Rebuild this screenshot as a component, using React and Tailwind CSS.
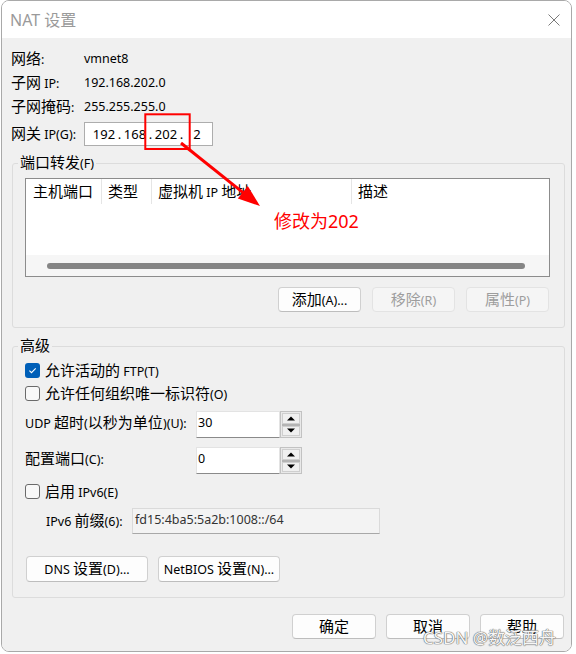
import React from "react";

const CJK_RE = /([\u2E80-\u9FFF\uF900-\uFAFF\uFF01-\uFF60]+)/;

function T({ children, c = "text-[15px]" }) {
  const parts = String(children).split(CJK_RE);
  return (
    <span>
      {parts.map((p, i) =>
        p === "" ? null : i % 2 === 1 ? (
          <span key={i} className={`${c} font-['Noto_Sans_CJK_SC',sans-serif]`}>
            {p}
          </span>
        ) : (
          <span key={i}>{p}</span>
        )
      )}
    </span>
  );
}

function Btn({ children, w = "w-[84px]", h = "h-[25px]", disabled }) {
  return (
    <div
      className={`${w} ${h} flex items-center justify-center rounded-[4px] border leading-[20px] ${
        disabled
          ? "border-[#e3e3e3] bg-[#f5f5f5] text-[#9d9d9d]"
          : "border-[#d0d0d0] border-b-[#bdbdbd] bg-[#fdfdfd] text-black"
      }`}
    >
      <T>{children}</T>
    </div>
  );
}

function Check({ checked }) {
  return checked ? (
    <div className="w-[15px] h-[15px] rounded-[3px] bg-[#005fb8] flex items-center justify-center shrink-0">
      <svg width="11" height="11" viewBox="0 0 11 11">
        <path d="M2.4 5.6 L4.5 7.7 L8.7 3.4" fill="none" stroke="white" strokeWidth="1.1" />
      </svg>
    </div>
  ) : (
    <div className="w-[15px] h-[15px] rounded-[3px] border border-[#6a6a6a] bg-[#f8f8f8] shrink-0" />
  );
}

function Spin() {
  return (
    <div className="w-[22px] h-[27px] border border-[#c2c2c2] bg-[#e9e9e9] p-[1px] flex flex-col">
      <div className="flex-1 border border-[#cfcfcf] bg-[#f0f0f0] flex items-center justify-center">
        <svg width="8" height="5" viewBox="0 0 8 5">
          <path d="M0 4.5 L4 0.5 L8 4.5Z" fill="#000" />
        </svg>
      </div>
      <div className="h-[2px] bg-[#b4b4b4]" />
      <div className="flex-1 border border-[#cfcfcf] bg-[#f0f0f0] flex items-center justify-center">
        <svg width="8" height="5" viewBox="0 0 8 5">
          <path d="M0 0.5 L4 4.5 L8 0.5Z" fill="#000" />
        </svg>
      </div>
    </div>
  );
}

function InfoRow({ label, value }) {
  return (
    <div className="h-[24px] flex items-center leading-[20px]">
      <div className="w-[73px]">
        <T>{label}</T>
      </div>
      <div>{value}</div>
    </div>
  );
}

function IpField({ v }) {
  return <span className="inline-block w-[24px] text-center">{v}</span>;
}
function Dot() {
  return <span className="inline-block w-[7px] text-center">.</span>;
}

export default function App() {
  return (
    <div className="relative w-[576px] h-[654px] bg-white font-['Noto_Sans','Noto_Sans_CJK_SC',sans-serif] text-[12.5px] text-black">
      <div className="ml-[1px] w-[571px] h-[652px] border border-[#a9a9a9] rounded-[8px] overflow-hidden flex flex-col">
        {/* title bar */}
        <div className="h-[37px] bg-white flex items-center justify-between pl-[8px] text-[#9a9a9a] text-[16px] leading-[22px] shrink-0">
          <div className="h-[22px] flex items-center">
            <T c="text-[16px]">NAT 设置</T>
          </div>
          <svg width="12" height="12" viewBox="0 0 12 12" className="mr-[11px]">
            <path d="M0.5 0.5 L11.5 11.5 M11.5 0.5 L0.5 11.5" stroke="#7a7a7a" strokeWidth="1" />
          </svg>
        </div>

        {/* body */}
        <div className="flex-1 bg-[#f0f0f0] flex flex-col pl-[10px]">
          <div className="mt-[9px] -ml-[1px] flex flex-col">
            <InfoRow label="网络:" value="vmnet8" />
            <InfoRow label="子网 IP:" value="192.168.202.0" />
            <InfoRow label="子网掩码:" value="255.255.255.0" />
            <div className="mt-[3px] h-[24px] flex items-center leading-[20px]">
              <div className="w-[73px]">
                <T>网关 IP(G):</T>
              </div>
              <div className="w-[129px] h-[24px] border border-[#adadad] bg-white flex items-center pl-[7px] text-[13px]">
                <IpField v="192" />
                <Dot />
                <IpField v="168" />
                <Dot />
                <IpField v="202" />
                <Dot />
                <IpField v="2" />
              </div>
            </div>
          </div>

          {/* port forwarding */}
          <fieldset className="mt-[7px] w-[553px] border border-[#dcdcdc] rounded-[3px] p-0">
            <legend className="ml-[5px] px-[2px] h-[20px] leading-[20px] flex items-center">
              <T>端口转发(F)</T>
            </legend>
            <div className="pl-[12px] pb-[15px]">
              <div className="mt-[5px] w-[525px] h-[99px] border border-[#8c8c8c] bg-white flex flex-col">
                <div className="h-[25px] flex leading-[20px]">
                  <div className="w-[76px] pl-[7px] border-r border-[#e5e5e5] flex items-center">
                    <T>主机端口</T>
                  </div>
                  <div className="w-[50px] pl-[6px] border-r border-[#e5e5e5] flex items-center">
                    <T>类型</T>
                  </div>
                  <div className="w-[200px] pl-[6px] border-r border-[#e5e5e5] flex items-center">
                    <T>虚拟机 IP 地址</T>
                  </div>
                  <div className="flex-1 pl-[6px] flex items-center">
                    <T>描述</T>
                  </div>
                </div>
                <div className="flex-1" />
                <div className="h-[21px] bg-[#f6f6f6] flex items-center">
                  <div className="flex-1 ml-[21px] mr-[24px] h-[6px] rounded-full bg-[#858585]" />
                </div>
              </div>
              <div className="mt-[10px] w-[525px] pr-[1px] flex justify-end gap-[11px]">
                <Btn w="w-[83px]">添加(A)...</Btn>
                <Btn w="w-[83px]" disabled>
                  移除(R)
                </Btn>
                <Btn w="w-[83px]" disabled>
                  属性(P)
                </Btn>
              </div>
            </div>
          </fieldset>

          {/* advanced */}
          <fieldset className="mt-[8px] w-[553px] border border-[#dcdcdc] rounded-[3px] p-0">
            <legend className="ml-[5px] px-[2px] h-[20px] leading-[20px] flex items-center">
              <T>高级</T>
            </legend>
            <div className="pl-[12px] pb-[15px] flex flex-col leading-[20px]">
              <div className="mt-[3px] h-[23px] flex items-center gap-[5px]">
                <Check checked />
                <div>
                  <T>允许活动的 FTP(T)</T>
                </div>
              </div>
              <div className="h-[23px] flex items-center gap-[5px]">
                <Check />
                <div>
                  <T>允许任何组织唯一标识符(O)</T>
                </div>
              </div>
              <div className="mt-[6px] h-[27px] flex items-center">
                <div className="w-[171px] -mt-[3px]">
                  <T>UDP 超时(以秒为单位)(U):</T>
                </div>
                <div className="w-[84px] h-[27px] bg-white border border-[#e3e3e3] border-b-[#8a8a8a] pl-[1px] pt-[1px] flex items-start">
                  30
                </div>
                <Spin />
              </div>
              <div className="mt-[9px] h-[27px] flex items-center">
                <div className="w-[171px] -mt-[3px]">
                  <T>配置端口(C):</T>
                </div>
                <div className="w-[84px] h-[27px] bg-white border border-[#e3e3e3] border-b-[#8a8a8a] pl-[1px] pt-[1px] flex items-start">
                  0
                </div>
                <Spin />
              </div>
              <div className="mt-[6px] h-[23px] flex items-center gap-[5px]">
                <Check />
                <div>
                  <T>启用 IPv6(E)</T>
                </div>
              </div>
              <div className="mt-[5px] h-[26px] flex items-center pl-[21px]">
                <div className="w-[86px]">
                  <T>IPv6 前缀(6):</T>
                </div>
                <div className="w-[248px] h-[26px] bg-[#f3f3f3] border border-[#dadada] border-b-[#a8a8a8] pl-[2px] pt-[1px] text-[#333333] flex items-start">
                  fd15:4ba5:5a2b:1008::/64
                </div>
              </div>
              <div className="mt-[22px] pl-[1px] flex gap-[10px]">
                <Btn w="w-[122px]" h="h-[26px]">
                  DNS 设置(D)...
                </Btn>
                <Btn w="w-[122px]" h="h-[26px]">
                  NetBIOS 设置(N)...
                </Btn>
              </div>
            </div>
          </fieldset>

          <div className="mt-[16px] pr-[7px] flex justify-end gap-[10px]">
            <Btn>确定</Btn>
            <Btn>取消</Btn>
            <Btn>帮助</Btn>
          </div>
        </div>
      </div>

      {/* red annotation */}
      <svg className="absolute left-0 top-0 pointer-events-none" width="576" height="654" viewBox="0 0 576 654">
        <rect x="145.3" y="114.3" width="44.4" height="34.7" fill="none" stroke="#ff0000" strokeWidth="2" />
        <line x1="181" y1="143" x2="244" y2="193.3" stroke="#ff0000" strokeWidth="3" />
        <path d="M260 206 L237.8 198.6 L247.8 186 Z" fill="#ff0000" />
      </svg>
      <div className="absolute left-[274px] top-[208px] leading-[24px] text-[18px] text-[#ff0000]">
        <T c="text-[18px]">修改为202</T>
      </div>

      {/* watermark */}
      <div className="absolute left-[423px] top-[626px] leading-[22px] text-[17px] text-[#f6f6f6] [text-shadow:0_0_1px_#6b6b6b,0_0_1px_#6b6b6b,0_0_1px_#6b6b6b] pointer-events-none">
        <T c="text-[17px]">CSDN @数泛西舟</T>
      </div>
    </div>
  );
}
